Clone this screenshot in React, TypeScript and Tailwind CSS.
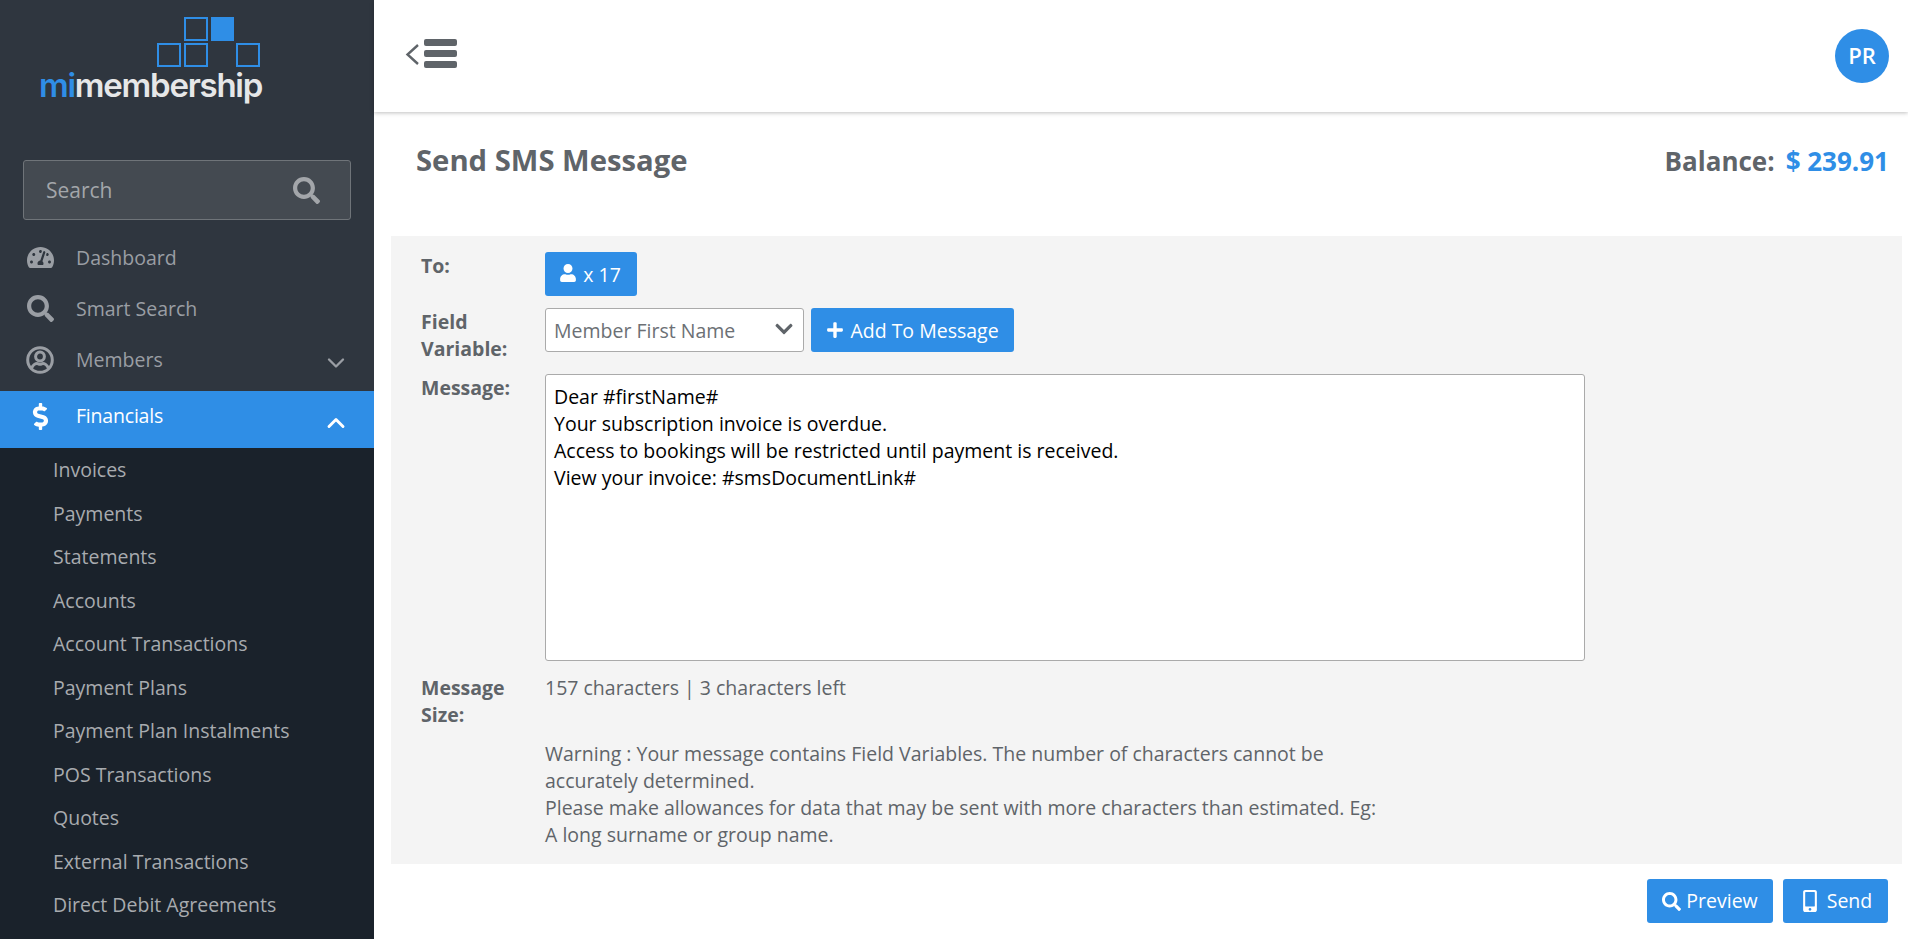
import { ChevronDown, ChevronUp } from "lucide-react"
import { FaChevronDown, FaDollarSign, FaMobileAlt, FaPlus, FaSearch, FaTachometerAlt, FaUser } from "react-icons/fa"

const FONT = "font-['Open_Sans',sans-serif]"

const SUB_ITEMS = [
  "Invoices",
  "Payments",
  "Statements",
  "Accounts",
  "Account Transactions",
  "Payment Plans",
  "Payment Plan Instalments",
  "POS Transactions",
  "Quotes",
  "External Transactions",
  "Direct Debit Agreements",
]

function Logo() {
  return (
    <div className="relative h-[112px] shrink-0">
      <svg className="absolute left-[157px] top-[17px]" width="104" height="51" viewBox="0 0 104 51" fill="none" stroke="#2f8ee6" strokeWidth="2">
        <rect x="28" y="1" width="22" height="22" />
        <rect x="54" y="0" width="23" height="24" fill="#2f8ee6" stroke="none" />
        <rect x="1" y="27" width="22" height="22" />
        <rect x="28" y="27" width="22" height="22" />
        <rect x="80" y="27" width="22" height="22" />
      </svg>
      <div className="absolute left-[39px] top-[65px] font-['Inter',sans-serif] text-[33px] font-semibold leading-[40px] tracking-[-1.25px] text-[#e6e7e8]">
        <span className="text-[#2f8ee6]">mi</span>membership
      </div>
    </div>
  )
}

// far fa-user-circle: thick ring with an outlined head and shoulders
function MembersIcon() {
  return (
    <svg width="28" height="28" viewBox="0 0 28 28" fill="none" stroke="currentColor" strokeWidth="3">
      <circle cx="14" cy="14" r="12.3" />
      <circle cx="14" cy="10.5" r="4.4" />
      <path d="M5.5 22.5c1.5-4 4.5-5 5.5-5 1 0 1.6.8 3 .8s2-.8 3-.8c1 0 4 1 5.5 5" />
    </svg>
  )
}

function NavRow({ icon, label, chevron }: { icon: React.ReactNode; label: string; chevron?: boolean }) {
  return (
    <div className="flex h-[51px] items-center text-[#9a9ea4]">
      <div className="flex w-[76px] justify-center pl-[5px] pr-[1px] text-[27px]">{icon}</div>
      <span className="text-[19.5px]">{label}</span>
      {chevron && <ChevronDown className="ml-auto mr-[24px] mt-[6px]" size={28} strokeWidth={2} />}
    </div>
  )
}

function Sidebar() {
  return (
    <aside className="flex h-[939px] w-[374px] shrink-0 flex-col overflow-hidden bg-[#2f363f]">
      <Logo />
      <div className="mx-[23px] mt-[48px] flex h-[60px] shrink-0 items-center justify-between rounded-[3px] border border-[#6f7479] bg-[#444a51] pl-[22px] pr-[30px]">
        <span className="mt-[2px] text-[21px] text-[#a3a6aa]">Search</span>
        <FaSearch className="text-[#a3a6aa]" size={27} />
      </div>
      <nav className="mt-[12px]">
        <NavRow icon={<FaTachometerAlt />} label="Dashboard" />
        <NavRow icon={<FaSearch />} label="Smart Search" />
        <NavRow icon={<MembersIcon />} label="Members" chevron />
        <div className="mt-[6px] flex h-[57px] items-center bg-[#2f8ee6] text-white">
          <div className="mb-[6px] flex w-[76px] justify-center pl-[5px] pr-[1px] text-[27px]">
            <FaDollarSign />
          </div>
          <span className="mb-[7px] text-[19.5px] font-medium tracking-[-0.2px]">Financials</span>
          <ChevronUp className="ml-auto mr-[24px] mt-[6px]" size={28} strokeWidth={2.5} />
        </div>
      </nav>
      <div className="flex-1 bg-[#1a222b]">
        {SUB_ITEMS.map((item) => (
          <div key={item} className="flex h-[43.5px] items-center pl-[53px] text-[19.5px] text-[#a8abaf]">
            {item}
          </div>
        ))}
      </div>
    </aside>
  )
}

function BlueButton({ icon, label, className }: { icon: React.ReactNode; label: string; className: string }) {
  return (
    <button type="button" className={`flex h-[44px] items-center justify-center rounded-[3px] bg-[#2f8ee6] text-[19.5px] text-white ${className}`}>
      {icon}
      {label}
    </button>
  )
}

function Label({ children }: { children: React.ReactNode }) {
  return <div className="w-[154px] shrink-0 pl-[30px] text-[19.5px] font-bold leading-[27px] text-[#5f6469]">{children}</div>
}

export default function App() {
  return (
    <div className={`flex h-[939px] w-[1908px] overflow-hidden bg-white ${FONT}`}>
      <Sidebar />
      <main className="min-w-0 flex-1">
        <header className="flex h-[112px] items-center justify-between pl-[30px] pr-[19px] shadow-[0_1px_4px_rgba(0,0,0,0.25)]">
          <svg width="52" height="30" viewBox="0 0 52 30" fill="#5f6469" className="mb-[4px] ml-[1px]">
            <rect x="19" y="0" width="33" height="7" rx="2" />
            <rect x="19" y="11" width="33" height="7" rx="2" />
            <rect x="19" y="22" width="33" height="7" rx="2" />
            <path d="M13 6 L2.5 15.5 L13 25" fill="none" stroke="#5f6469" strokeWidth="2.4" />
          </svg>
          <div className="mt-[-1px] flex h-[54px] w-[54px] items-center justify-center rounded-full bg-[#2f8ee6] text-[22px] font-semibold text-white">
            PR
          </div>
        </header>
        <div className="flex h-[124px] items-start justify-between pl-[42px] pr-[19px] pt-[30px]">
          <h1 className="text-[29.25px] font-bold leading-[37px] text-[#5f6469]">Send SMS Message</h1>
          <div className="mt-[3px] flex gap-[11px] text-[26px] font-bold leading-[33px]">
            <span className="text-[#5f6469]">Balance:</span>
            <span className="text-[#2f8ee6]">$ 239.91</span>
          </div>
        </div>
        <section className="ml-[17px] mr-[6px] h-[628px] bg-[#f4f4f4] pt-[16px] text-[19.5px] leading-[27px] text-[#5f6469]">
          <div className="flex h-[56px]">
            <Label>To:</Label>
            <div>
              <BlueButton icon={<FaUser className="mb-[2px] mr-[6px]" size={18} />} label="x 17" className="w-[92px] pr-[2px]" />
            </div>
          </div>
          <div className="flex h-[66px]">
            <Label>
              <div>Field</div>
              <div>Variable:</div>
            </Label>
            <div className="flex h-[44px] gap-[7px]">
              <div className="flex w-[259px] items-center justify-between rounded-[3px] border border-[#aaaaaa] bg-white pl-[8px] pr-[9px] text-[#6c7075]">
                <span>Member First Name</span>
                <FaChevronDown className="mb-[2px] text-[#5f6469]" size={20} />
              </div>
              <BlueButton icon={<FaPlus className="mr-[6px]" size={18} />} label="Add To Message" className="w-[203px]" />
            </div>
          </div>
          <div className="flex h-[302px]">
            <Label>Message:</Label>
            <div className="h-[287px] w-[1040px] rounded-[3px] border border-[#aaaaaa] bg-white px-[8px] pt-[8px] text-black">
              <div>Dear #firstName#</div>
              <div>Your subscription invoice is overdue.</div>
              <div>Access to bookings will be restricted until payment is received.</div>
              <div>View your invoice: #smsDocumentLink#</div>
            </div>
          </div>
          <div className="mt-[-2px] flex">
            <Label>
              <div className="w-[80px]">Message Size:</div>
            </Label>
            <div className="w-[835px]">
              <div>157 characters | 3 characters left</div>
              <p className="mt-[39px]">
                Warning : Your message contains Field Variables. The number of characters cannot be accurately determined.
                <br />
                Please make allowances for data that may be sent with more characters than estimated. Eg: A long surname or group name.
              </p>
            </div>
          </div>
        </section>
        <div className="mt-[15px] flex justify-end gap-[10px] pr-[20px]">
          <BlueButton icon={<FaSearch className="mr-[5px]" size={19} />} label="Preview" className="w-[126px]" />
          <BlueButton icon={<FaMobileAlt className="mr-[6px]" size={22} />} label="Send" className="w-[105px]" />
        </div>
      </main>
    </div>
  )
}
